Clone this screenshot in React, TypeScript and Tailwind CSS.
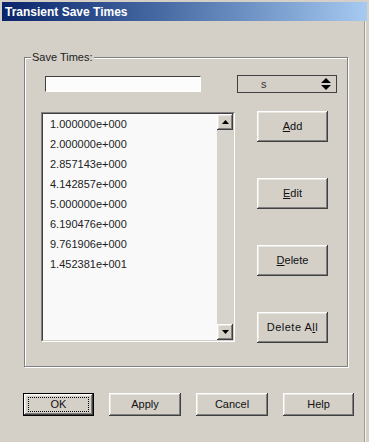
import React from "react";

const raised =
  "bg-[#d4d0c8] shadow-[inset_-1px_-1px_#404040,inset_1px_1px_#ffffff,inset_-2px_-2px_#808080,inset_2px_2px_#e8e6e0]";

function Btn({ children, className = "" }: { children: React.ReactNode; className?: string }) {
  return (
    <div className={`flex items-center justify-center text-[11px] text-[#111] ${raised} ${className}`}>
      {children}
    </div>
  );
}

function Arrow({ up, w = 7, h = 4 }: { up?: boolean; w?: number; h?: number }) {
  return (
    <svg width={w} height={h} viewBox={`0 0 ${w} ${h}`}>
      <polygon points={up ? `0,${h} ${w},${h} ${w / 2},0` : `0,0 ${w},0 ${w / 2},${h}`} fill="#000" />
    </svg>
  );
}

const times = [
  "1.000000e+000",
  "2.000000e+000",
  "2.857143e+000",
  "4.142857e+000",
  "5.000000e+000",
  "6.190476e+000",
  "9.761906e+000",
  "1.452381e+001",
];

export default function App() {
  return (
    <div className="w-[369px] h-[442px] bg-[#d4d0c8] font-['Liberation_Sans',Arial,sans-serif] text-black overflow-hidden flex flex-col">
      {/* title bar */}
      <div className="mt-[2px] ml-[2px] mr-[2px] h-[19px] flex items-center pl-[3px] bg-gradient-to-r from-[#0a246a] to-[#a6caf0]">
        <span className="text-white font-bold text-[12px] leading-none">Transient Save Times</span>
      </div>

      <div className="flex flex-1">
        <div className="w-[364px] flex flex-col">
          {/* group box */}
          <div className="relative ml-[24px] mt-[36px] w-[324px] h-[310px] border border-[#808080] shadow-[1px_1px_0_#ffffff,inset_1px_1px_0_#ffffff]">
            <span className="absolute left-[6px] -top-[8px] px-[1px] bg-[#d4d0c8] text-[11px] leading-[14px] text-[#222]">
              Save Times:
            </span>

            <div className="flex items-start mt-[17px]">
              <div className="ml-[20px] mt-[1px] w-[156px] h-[16px] border-t border-l border-[#404040] border-b border-r border-b-[#ffffff] border-r-[#ffffff] bg-[#fcfcfc]" />
              <div className="ml-[36px] w-[100px] h-[18px] border border-[#404040] flex items-center">
                <span className="ml-[23px] text-[11px] leading-none text-[#333]">s</span>
                <div className="ml-auto mr-[5px] flex flex-col gap-[2px]">
                  <Arrow up w={10} h={5} />
                  <Arrow w={10} h={5} />
                </div>
              </div>
            </div>

            <div className="flex mt-[18px]">
              {/* list */}
              <div className="ml-[16px] mt-[1px] w-[194px] h-[230px] border-t border-l border-[#808080] border-b border-r border-b-[#ffffff] border-r-[#ffffff]">
                <div className="w-full h-full border-t border-l border-[#404040] border-b border-r border-b-[#d4d0c8] border-r-[#d4d0c8] flex bg-[#f9f9f9]">
                  <div className="flex-1 pl-[7px] flex flex-col">
                    {times.map((t) => (
                      <div key={t} className="h-[20px] flex items-center text-[11px] text-[#222]">
                        {t}
                      </div>
                    ))}
                  </div>
                  <div className="w-[16px] flex flex-col bg-[#d6d3cc]">
                    <div className={`h-[16px] flex items-center justify-center ${raised}`}>
                      <Arrow up />
                    </div>
                    <div className="flex-1" />
                    <div className={`h-[16px] flex items-center justify-center ${raised}`}>
                      <Arrow />
                    </div>
                  </div>
                </div>
              </div>

              {/* buttons */}
              <div className="ml-[22px] flex flex-col gap-[36px]">
                <Btn className="w-[71px] h-[31px]">
                  <span><u>A</u>dd</span>
                </Btn>
                <Btn className="w-[71px] h-[31px]">
                  <span><u>E</u>dit</span>
                </Btn>
                <Btn className="w-[71px] h-[31px]">
                  <span><u>D</u>elete</span>
                </Btn>
                <Btn className="w-[71px] h-[31px]">
                  <span className="tracking-[0.5px]">Delete A<u>l</u>l</span>
                </Btn>
              </div>
            </div>
          </div>

          {/* dialog buttons */}
          <div className="flex gap-[15px] ml-[23px] mt-[26px]">
            <div className="w-[71px] h-[23px] border border-black">
              <Btn className="w-full h-full">
                <div className="w-[61px] h-[15px] border border-dotted border-black flex items-center justify-center">
                  OK
                </div>
              </Btn>
            </div>
            <Btn className="w-[72px] h-[23px]">Apply</Btn>
            <Btn className="w-[72px] h-[23px]">Cancel</Btn>
            <Btn className="w-[71px] h-[23px]">Help</Btn>
          </div>
        </div>
        <div className="flex-1 border-l border-[#a09c94] shadow-[inset_1px_0_#f4f2ee]" />
      </div>
    </div>
  );
}
